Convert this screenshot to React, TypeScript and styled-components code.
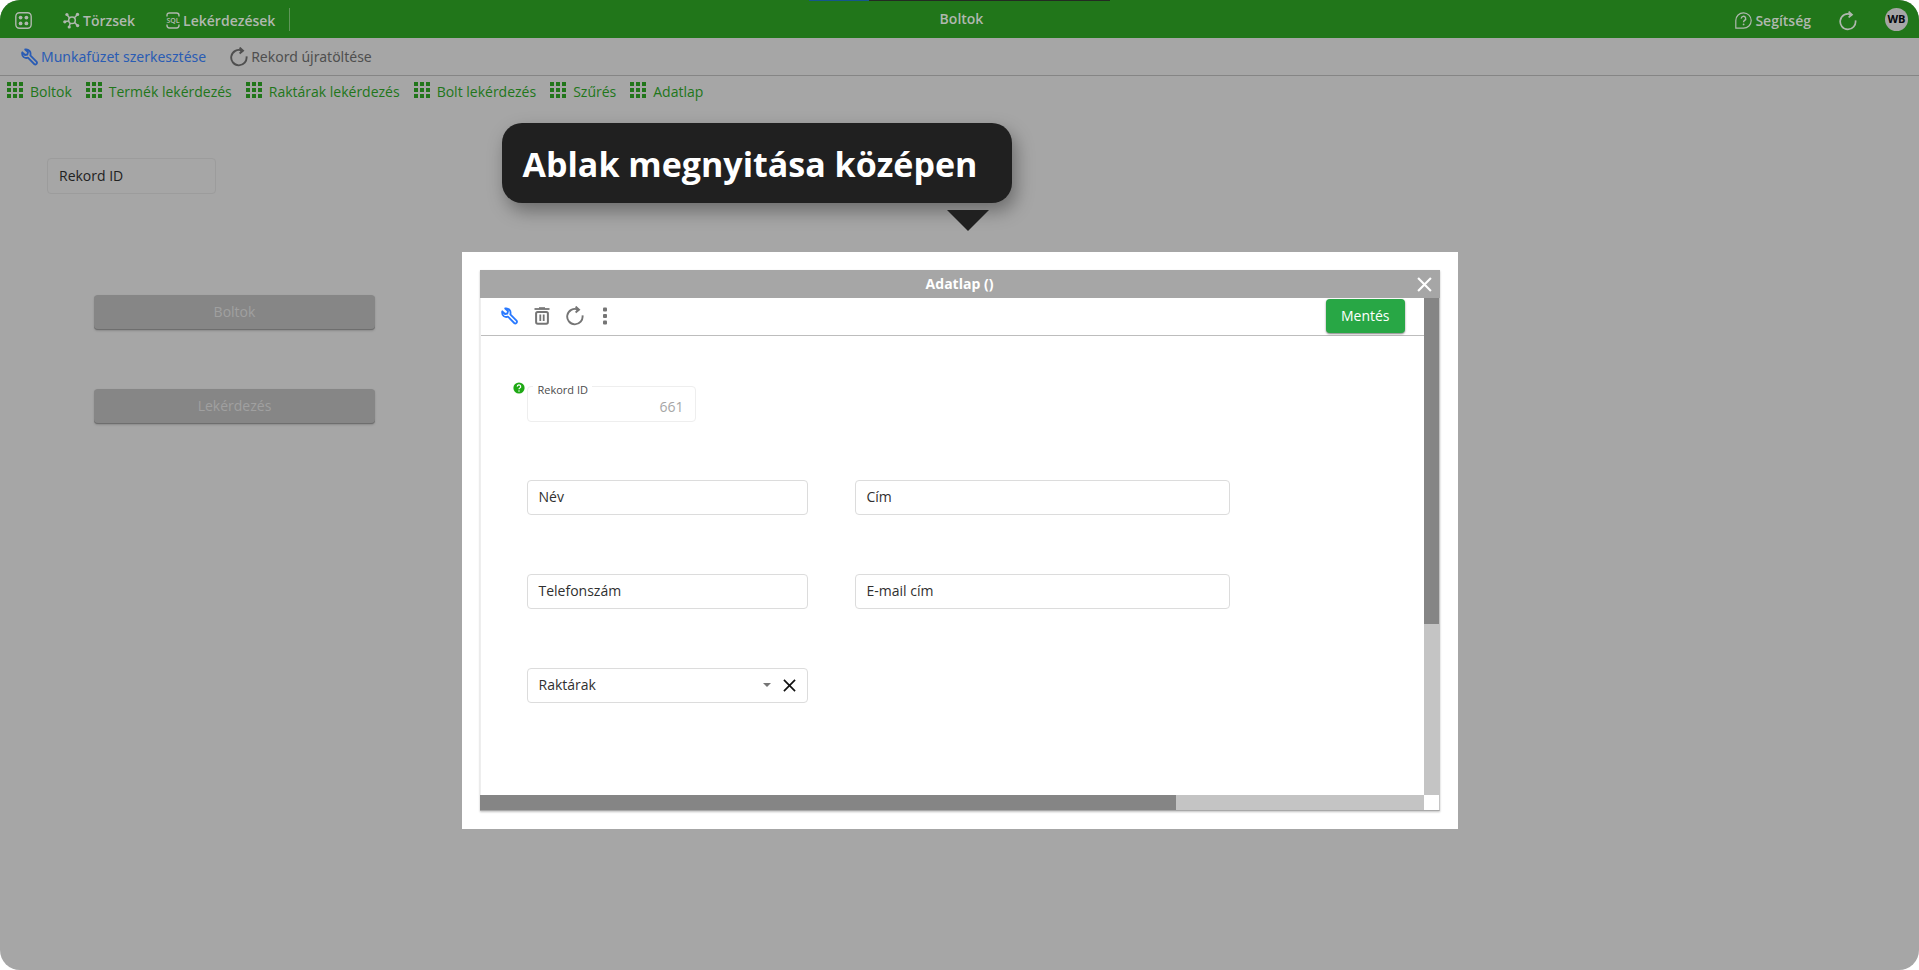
import React from 'react';
import styled, { createGlobalStyle, css } from 'styled-components';

const GlobalStyle = createGlobalStyle`
  *, *::before, *::after { box-sizing: border-box; }
  body {
    margin: 0;
    background: #ffffff;
    font-family: "Open Sans", "Noto Sans", sans-serif;
    font-size: 14px;
    line-height: 20px;
  }
  button, input, select { font: inherit; }
`;

const Page = styled.div`
  position: relative;
  display: flex;
  flex-direction: column;
  min-height: 100vh;
  overflow: hidden;
  border-radius: 20px;
  background: #a6a6a6;
`;

/* ---------- top bar ---------- */

const TopBar = styled.header`
  position: relative;
  display: grid;
  grid-template-columns: 1fr auto 1fr;
  align-items: center;
  height: 38px;
  padding: 0 11px 0 15px;
  background: #21761a;
  color: #b0b8af;
`;

const LoadingLine = styled.div`
  position: absolute;
  top: 0;
  left: 50%;
  width: 301px;
  height: 1px;
  margin-left: -151px;
  background: linear-gradient(to right, #15568c 20%, #232b22 20%);
`;

const TopGroup = styled.nav<{ $end?: boolean }>`
  display: flex;
  align-items: center;
  height: 100%;
  ${({ $end }) =>
    $end
      ? css`
          justify-content: flex-end;
          gap: 28px;
        `
      : css`
          gap: 31px;
        `}
`;

const PlainButton = styled.button`
  display: flex;
  align-items: center;
  gap: 3px;
  padding: 0;
  border: 0;
  background: none;
  color: inherit;
  cursor: pointer;
  white-space: nowrap;

  svg { flex: none; }
`;

const MenuButton = styled(PlainButton)`
  padding-top: 3px;
  font-weight: 600;
`;

const Divider = styled.span`
  width: 1px;
  height: 23px;
  margin-left: -17px;
  background: #5f9659;
`;

const PageTitle = styled.h1`
  margin: 0;
  font-size: 14px;
  font-weight: 600;
`;

const Avatar = styled(PlainButton)`
  justify-content: center;
  width: 23px;
  height: 23px;
  border-radius: 50%;
  background: #a6a6a6;
  color: #05080c;
  font-size: 11px;
  font-weight: 700;
`;

/* ---------- action bar and tabs ---------- */

const ActionBar = styled.div`
  display: flex;
  align-items: center;
  gap: 24px;
  height: 38px;
  padding: 0 21px;
  border-bottom: 1px solid #858585;
  font-family: "Noto Sans", sans-serif;
`;

const ActionButton = styled(PlainButton)<{ $color: string }>`
  color: ${({ $color }) => $color};
`;

const TabBar = styled.nav`
  display: flex;
  align-items: center;
  gap: 14px;
  height: 32px;
  padding: 0 7px;
`;

const TabLink = styled.a`
  display: flex;
  align-items: center;
  gap: 7px;
  color: #21761a;
  text-decoration: none;
  white-space: nowrap;

  svg { margin-bottom: 5px; }
`;

/* ---------- forms ---------- */

const Main = styled.main`
  display: flex;
  flex-direction: column;
  align-items: flex-start;
  gap: 58px;
  padding: 50px 47px;
`;

const Field = styled.div<{ $width: number; $line?: string; $text?: string }>`
  position: relative;
  display: flex;
  align-items: center;
  gap: 12px;
  width: ${({ $width }) => $width}px;
  height: 35px;
  padding: 0 11px 1px;
  border: 1px solid ${({ $line }) => $line ?? '#dcdcdc'};
  border-radius: 4px;
  color: ${({ $text }) => $text ?? '#303030'};

  label { flex: none; }
`;

const RecordField = styled(Field)`
  height: 36px;
  padding-bottom: 0;
`;

const TextInput = styled.input<{ $end?: boolean }>`
  flex: 1;
  min-width: 0;
  padding: 0;
  border: 0;
  outline: 0;
  background: none;
  color: inherit;
  text-align: ${({ $end }) => ($end ? 'right' : 'left')};

  &:disabled { color: #a6a6a6; padding-top: 6px; }
`;

const Select = styled.select`
  flex: 1;
  min-width: 0;
  border: 0;
  outline: 0;
  appearance: none;
  background: none;
  color: inherit;
`;

const FloatingLabel = styled.label`
  position: absolute;
  top: -4px;
  left: 5px;
  padding: 0 4px 0 5px;
  background: #ffffff;
  color: #4c4c4c;
  font-size: 11px;
  line-height: 14px;
`;

const HelpDot = styled.span`
  position: absolute;
  top: -5px;
  left: -15px;
  display: flex;
`;

const ButtonColumn = styled.div`
  display: flex;
  flex-direction: column;
  gap: 59px;
  width: 281px;
  margin: 43px 0 0 47px;
`;

const DisabledButton = styled.button`
  height: 35px;
  padding: 0 0 1px;
  border: 0;
  border-radius: 4px;
  background: #868686;
  color: #a0a0a0;
  font-weight: 500;
  box-shadow: inset 0 -1px 0 #6e6e6e, 0 1px 2px #8a8a8a;
`;

/* ---------- callout and dialog ---------- */

const Overlay = styled.div`
  position: absolute;
  inset: 0;
  display: flex;
  flex-direction: column;
  align-items: center;
  padding: 123px 20px 20px;
`;

const Stack = styled.div`
  width: 100%;
  max-width: 996px;
`;

const Callout = styled.div`
  display: flex;
  flex-direction: column;
  align-items: flex-end;
  gap: 7px;
  width: fit-content;
  margin: 0 0 21px 40px;
`;

const CalloutText = styled.p`
  margin: 0;
  padding: 17px 35px 15px 21px;
  border-radius: 20px;
  background: #202020;
  color: #ffffff;
  font-size: 34px;
  font-weight: 700;
  line-height: 48px;
  white-space: nowrap;
  box-shadow: 4px 8px 18px rgba(0, 0, 0, 0.35);
`;

const CalloutArrow = styled.svg`
  z-index: 1;
  margin-right: 23px;
`;

const Frame = styled.div`
  padding: 18px;
  background: #ffffff;
`;

const Dialog = styled.section`
  box-shadow: 0 1px 2px rgba(0, 0, 0, 0.25);
`;

const DialogHeader = styled.header`
  display: grid;
  grid-template-columns: 1fr auto 1fr;
  align-items: center;
  height: 28px;
  padding: 0 8px;
  background: #a6a6a6;
  color: #ffffff;

  h2 {
    grid-column: 2;
    margin: 0;
    font-size: 14px;
    font-weight: 700;
  }
`;

const CloseButton = styled(PlainButton)`
  justify-self: end;
`;

const DialogBody = styled.div`
  display: grid;
  grid-template-columns: minmax(0, 1fr) 15px;
  grid-template-rows: auto 15px;
  border-right: 1px solid #c4c4c4;
  border-bottom: 1px solid #a8a8a8;
  background: #ffffff;
`;

const DialogContent = styled.div`
  overflow: hidden;
  border-left: 1px solid #eeeeee;
`;

const DialogToolbar = styled.div`
  display: flex;
  align-items: center;
  gap: 16px;
  height: 38px;
  padding: 0 19px 2px 20px;
  border-bottom: 1px solid #bdbdbd;
  color: #757575;
`;

const SaveButton = styled.button`
  height: 34px;
  margin-left: auto;
  padding: 0 15px;
  border: 0;
  border-radius: 4px;
  background: #28a745;
  color: #ffffff;
  font-weight: 500;
  cursor: pointer;
  box-shadow: 0 1px 2px rgba(0, 0, 0, 0.5);
`;

const Form = styled.form`
  display: grid;
  grid-auto-rows: 36px;
  gap: 58px;
  padding: 50px 46px 91px;
`;

const FormRow = styled.div`
  display: flex;
  align-items: flex-start;
  gap: 47px;
`;

const ScrollTrack = styled.div<{ $horizontal?: boolean }>`
  display: flex;
  flex-direction: ${({ $horizontal }) => ($horizontal ? 'row' : 'column')};
  background: #c4c4c4;
`;

const ScrollThumb = styled.div<{ $visible: number; $total: number }>`
  flex: 0 0 calc(${({ $visible, $total }) => `100% * ${$visible} / ${$total}`});
  background: #858585;
`;

/* ---------- icons ---------- */

const AppsIcon = () => (
  <svg width="17" height="17" viewBox="0 0 17 17" fill="none" stroke="currentColor" strokeWidth="1.4" aria-hidden="true">
    <rect x="0.8" y="0.8" width="15.4" height="15.4" rx="3.6" />
    <g fill="currentColor" stroke="none">
      <circle cx="5.6" cy="5.6" r="1.9" />
      <circle cx="11.4" cy="5.6" r="1.9" />
      <circle cx="5.6" cy="11.4" r="1.9" />
      <circle cx="11.4" cy="11.4" r="1.9" />
    </g>
  </svg>
);

const HubIcon = () => (
  <svg width="17" height="17" viewBox="0 0 17 17" fill="none" stroke="currentColor" strokeWidth="1.5" aria-hidden="true">
    <circle cx="9" cy="8.2" r="3.3" />
    <path d="M6.6 6L4.4 3.2M11.4 5.8L14 3M11.6 10.4L14 13M7.4 11L6.4 14M5.7 9L2.4 9.6" />
    <g fill="currentColor" stroke="none">
      <circle cx="3.9" cy="2.5" r="1.6" />
      <circle cx="14.5" cy="2.4" r="1.7" />
      <circle cx="14.6" cy="13.6" r="1.7" />
      <circle cx="6.2" cy="15" r="1.6" />
      <circle cx="1.8" cy="9.8" r="1.6" />
    </g>
  </svg>
);

const SqlIcon = () => (
  <svg width="14" height="17" viewBox="0 0 14 17" fill="none" stroke="currentColor" strokeWidth="1.4" aria-hidden="true">
    <path d="M1 4.6V3.4Q1 1 3.4 1H10.6Q13 1 13 3.4V4.6M1 12.4V13.6Q1 16 3.4 16H10.6Q13 16 13 13.6V12.4" />
    <text x="7" y="11" textAnchor="middle" fontSize="7" fontFamily="Noto Sans, sans-serif" fontWeight="600" fill="currentColor" stroke="none">SQL</text>
  </svg>
);

const HelpIcon = () => (
  <svg width="17" height="17" viewBox="0 0 17 17" fill="none" stroke="currentColor" strokeWidth="1.2" aria-hidden="true">
    <path d="M0.8 16.2V8.4A7.7 7.7 0 1 1 8.5 16.2Z" />
    <path d="M6.3 6.6A2.2 2.2 0 1 1 9.6 8.4Q8.6 9 8.6 10.2" strokeWidth="1.4" />
    <circle cx="8.6" cy="12.4" r="0.9" fill="currentColor" stroke="none" />
  </svg>
);

const RefreshIcon = ({ weight = 1.7 }: { weight?: number }) => (
  <svg width="18" height="20" viewBox="0 0 18 20" fill="none" stroke="currentColor" strokeWidth={weight} aria-hidden="true">
    <path d="M16.5 9.4A7.7 7.7 0 1 1 11.8 3.5" />
    <path d="M9.6 0.6L13 3.7L9.6 6.4" />
    <path d="M10.4 2L12.8 3.7L10.4 5.4Z" fill="currentColor" stroke="none" />
  </svg>
);

const WrenchIcon = () => (
  <svg width="17" height="18" viewBox="0 0 17 18" fill="none" stroke="currentColor" strokeWidth="1.8" strokeLinejoin="round" aria-hidden="true">
    <path d="M4.2 1.5L7 4.2L6.4 6.5L4 7L1.3 4.3Q0.6 7.4 2.7 9.1Q4.6 10.5 6.9 9.7L13.2 16Q14.3 17 15.5 15.9Q16.5 14.7 15.5 13.7L9.3 7.4Q10.1 4.8 8.5 2.9Q6.8 1 4.2 1.5Z" />
  </svg>
);

const TrashIcon = () => (
  <svg width="16" height="18" viewBox="0 0 16 18" fill="none" stroke="currentColor" aria-hidden="true">
    <path d="M0.5 2H15.5" strokeWidth="1.8" />
    <path d="M5 1H11" strokeWidth="1.6" />
    <rect x="2.1" y="4.9" width="11.8" height="11.8" rx="1.6" strokeWidth="2" />
    <path d="M6.3 7.6V14M9.7 7.6V14" strokeWidth="1.8" />
  </svg>
);

const MoreIcon = () => (
  <svg width="10" height="18" viewBox="0 0 10 18" fill="currentColor" aria-hidden="true">
    <rect x="3" y="0.4" width="4" height="4" rx="1" />
    <rect x="3" y="7" width="4" height="4" rx="1" />
    <rect x="3" y="13.6" width="4" height="4" rx="1" />
  </svg>
);

const GridIcon = () => (
  <svg width="16" height="16" viewBox="0 0 16 16" fill="currentColor" aria-hidden="true">
    {[0, 6, 12].map((y) => [0, 6, 12].map((x) => <rect key={`${x}-${y}`} x={x} y={y} width="4" height="4" />))}
  </svg>
);

const CrossIcon = ({ size, weight }: { size: number; weight: number }) => (
  <svg width={size} height={size} viewBox="0 0 14 14" fill="none" stroke="currentColor" strokeWidth={weight} aria-hidden="true">
    <path d="M1 1L13 13M13 1L1 13" />
  </svg>
);

const CaretIcon = () => (
  <svg width="8" height="4" viewBox="0 0 8 4" fill="#757575" aria-hidden="true">
    <path d="M0 0H8L4 4Z" />
  </svg>
);

const QuestionIcon = () => (
  <svg width="12" height="12" viewBox="0 0 12 12" fill="none" role="img" aria-label="Súgó">
    <circle cx="6" cy="6" r="5.6" fill="#1fa915" />
    <path d="M4.3 4.6A1.7 1.7 0 1 1 6.8 6Q6 6.4 6 7.3" stroke="#ffffff" strokeWidth="1.2" />
    <circle cx="6" cy="9" r="0.75" fill="#ffffff" />
  </svg>
);

const ClearButton = styled(PlainButton)`
  color: #111111;
`;

/* ---------- page ---------- */

const tabs = ['Boltok', 'Termék lekérdezés', 'Raktárak lekérdezés', 'Bolt lekérdezés', 'Szűrés', 'Adatlap'];

const formRows = [
  [
    { id: 'nev', label: 'Név', width: 281 },
    { id: 'cim', label: 'Cím', width: 375 },
  ],
  [
    { id: 'telefon', label: 'Telefonszám', width: 281 },
    { id: 'email', label: 'E-mail cím', width: 375 },
  ],
];

export default function App() {
  return (
    <>
      <GlobalStyle />
      <Page>
        <TopBar>
          <LoadingLine />
          <TopGroup>
            <MenuButton aria-label="Alkalmazások"><AppsIcon /></MenuButton>
            <MenuButton><HubIcon />Törzsek</MenuButton>
            <MenuButton><SqlIcon />Lekérdezések</MenuButton>
            <Divider />
          </TopGroup>
          <PageTitle>Boltok</PageTitle>
          <TopGroup $end>
            <MenuButton><HelpIcon />Segítség</MenuButton>
            <MenuButton aria-label="Frissítés"><RefreshIcon /></MenuButton>
            <Avatar>WB</Avatar>
          </TopGroup>
        </TopBar>

        <ActionBar>
          <ActionButton $color="#2a5cb4"><WrenchIcon />Munkafüzet szerkesztése</ActionButton>
          <ActionButton $color="#4f4f4f"><RefreshIcon weight={1.9} />Rekord újratöltése</ActionButton>
        </ActionBar>

        <TabBar>
          {tabs.map((tab) => (
            <TabLink key={tab} href="#"><GridIcon />{tab}</TabLink>
          ))}
        </TabBar>

        <Main>
          <RecordField $width={169} $line="#9c9c9c" $text="#222222">
            <label htmlFor="rekord-kereso">Rekord ID</label>
            <TextInput id="rekord-kereso" />
          </RecordField>
          <ButtonColumn>
            <DisabledButton disabled>Boltok</DisabledButton>
            <DisabledButton disabled>Lekérdezés</DisabledButton>
          </ButtonColumn>
        </Main>

        <Overlay>
          <Stack>
            <Callout>
              <CalloutText>Ablak megnyitása középen</CalloutText>
              <CalloutArrow width="42" height="21" viewBox="0 0 42 21" aria-hidden="true">
                <path d="M0 0H42L21 21Z" fill="#202020" />
              </CalloutArrow>
            </Callout>

            <Frame>
              <Dialog role="dialog" aria-labelledby="dialog-title">
                <DialogHeader>
                  <h2 id="dialog-title">Adatlap ()</h2>
                  <CloseButton aria-label="Bezárás"><CrossIcon size={15} weight={2} /></CloseButton>
                </DialogHeader>
                <DialogBody>
                  <DialogContent>
                    <DialogToolbar>
                      <ActionButton $color="#2979ff" aria-label="Szerkesztés"><WrenchIcon /></ActionButton>
                      <PlainButton aria-label="Törlés"><TrashIcon /></PlainButton>
                      <PlainButton aria-label="Újratöltés"><RefreshIcon weight={1.9} /></PlainButton>
                      <PlainButton aria-label="Továbbiak"><MoreIcon /></PlainButton>
                      <SaveButton type="submit" form="adatlap">Mentés</SaveButton>
                    </DialogToolbar>
                    <Form id="adatlap">
                      <FormRow>
                        <RecordField $width={169} $line="#eeeeee">
                          <HelpDot><QuestionIcon /></HelpDot>
                          <FloatingLabel htmlFor="rekord-id">Rekord ID</FloatingLabel>
                          <TextInput id="rekord-id" defaultValue="661" disabled $end />
                        </RecordField>
                      </FormRow>
                      {formRows.map((row) => (
                        <FormRow key={row[0].id}>
                          {row.map(({ id, label, width }) => (
                            <Field key={id} $width={width}>
                              <label htmlFor={id}>{label}</label>
                              <TextInput id={id} />
                            </Field>
                          ))}
                        </FormRow>
                      ))}
                      <FormRow>
                        <Field $width={281}>
                          <label htmlFor="raktarak">Raktárak</label>
                          <Select id="raktarak" defaultValue=""><option value="" /></Select>
                          <CaretIcon />
                          <ClearButton type="button" aria-label="Kijelölés törlése">
                            <CrossIcon size={13} weight={1.8} />
                          </ClearButton>
                        </Field>
                      </FormRow>
                    </Form>
                  </DialogContent>
                  <ScrollTrack><ScrollThumb $visible={326} $total={497} /></ScrollTrack>
                  <ScrollTrack $horizontal><ScrollThumb $visible={696} $total={944} /></ScrollTrack>
                </DialogBody>
              </Dialog>
            </Frame>
          </Stack>
        </Overlay>
      </Page>
    </>
  );
}
